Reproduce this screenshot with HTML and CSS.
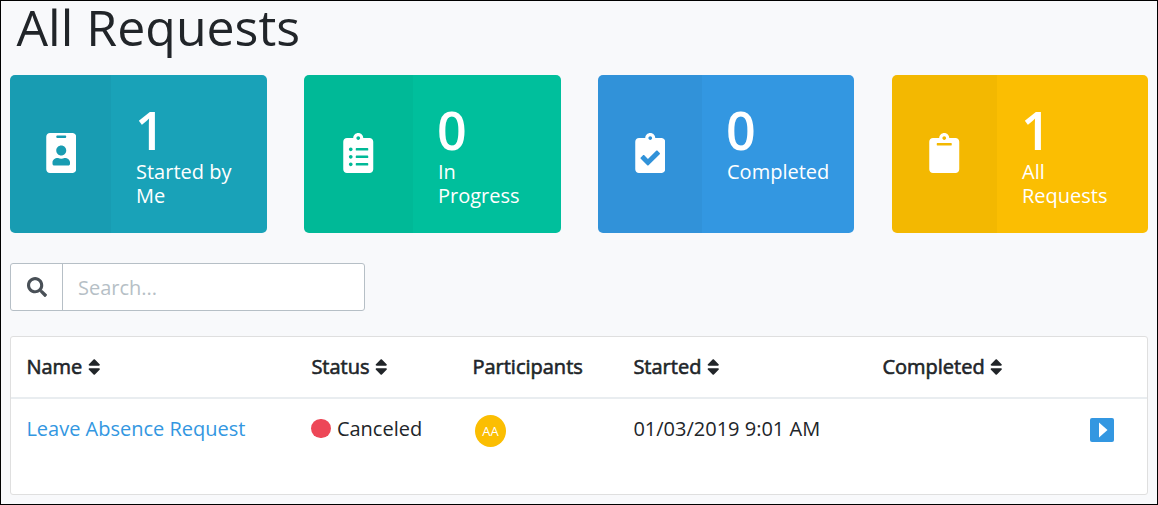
FILE: index.html
```
<!DOCTYPE html>
<html lang="en">
<head>
<meta charset="utf-8">
<title>All Requests</title>
<link rel="stylesheet" href="styles.css">
</head>
<body>
<main class="page">
  <h1 class="title">All Requests</h1>
  <section class="cards">
    <a class="card teal">
      <span class="card-icon"><svg viewBox="0 0 384 512"><path fill-rule="evenodd" d="M336 0H48C21.500 0 0 21.500 0 48v416c0 26.500 21.500 48 48 48h288c26.500 0 48-21.500 48-48V48c0-26.500-21.500-48-48-48zM144 32h96c8.800 0 16 7.200 16 16s-7.200 16-16 16h-96c-8.800 0-16-7.200-16-16s7.200-16 16-16zm48 128c35.300 0 64 28.700 64 64s-28.700 64-64 64-64-28.700-64-64 28.700-64 64-64zm112 236.800c0 10.600-10 19.200-22.400 19.200H102.400C90 416 80 407.400 80 396.800v-19.200c0-31.800 30.100-57.600 67.200-57.600h5c12.300 5.100 25.700 8 39.800 8s27.600-2.900 39.800-8h5c37.100 0 67.200 25.800 67.200 57.600v19.200z"/></svg></span>
      <span class="card-body"><strong class="count">1</strong><span class="label">Started by<br>Me</span></span>
    </a>
    <a class="card green">
      <span class="card-icon"><svg viewBox="0 0 384 512"><path fill-rule="evenodd" d="M336 64h-80c0-35.300-28.700-64-64-64s-64 28.700-64 64H48C21.500 64 0 85.500 0 112v352c0 26.500 21.500 48 48 48h288c26.500 0 48-21.500 48-48V112c0-26.500-21.500-48-48-48zM96 424c-13.300 0-24-10.700-24-24s10.700-24 24-24 24 10.700 24 24-10.700 24-24 24zm0-96c-13.300 0-24-10.700-24-24s10.700-24 24-24 24 10.700 24 24-10.700 24-24 24zm0-96c-13.300 0-24-10.700-24-24s10.700-24 24-24 24 10.700 24 24-10.700 24-24 24zm96-192c13.300 0 24 10.700 24 24s-10.700 24-24 24-24-10.700-24-24 10.700-24 24-24zm128 368c0 4.400-3.600 8-8 8H168c-4.400 0-8-3.600-8-8v-16c0-4.400 3.600-8 8-8h144c4.400 0 8 3.600 8 8v16zm0-96c0 4.400-3.600 8-8 8H168c-4.400 0-8-3.600-8-8v-16c0-4.400 3.600-8 8-8h144c4.400 0 8 3.600 8 8v16zm0-96c0 4.400-3.600 8-8 8H168c-4.400 0-8-3.600-8-8v-16c0-4.400 3.600-8 8-8h144c4.400 0 8 3.600 8 8v16z"/></svg></span>
      <span class="card-body"><strong class="count">0</strong><span class="label">In<br>Progress</span></span>
    </a>
    <a class="card blue">
      <span class="card-icon"><svg viewBox="0 0 384 512"><path fill-rule="evenodd" d="M336 64h-80c0-35.300-28.700-64-64-64s-64 28.700-64 64H48C21.500 64 0 85.500 0 112v352c0 26.500 21.500 48 48 48h288c26.500 0 48-21.500 48-48V112c0-26.500-21.500-48-48-48zM192 40c13.300 0 24 10.700 24 24s-10.700 24-24 24-24-10.700-24-24 10.700-24 24-24zm121.200 231.800l-143 141.800c-4.700 4.700-12.300 4.600-17-.1l-82.600-83.300c-4.700-4.700-4.600-12.300.1-17L99.100 285c4.700-4.700 12.300-4.600 17 .1l46 46.400 106-105.200c4.700-4.700 12.300-4.600 17 .1l28.200 28.400c4.700 4.800 4.600 12.300-.1 17z"/></svg></span>
      <span class="card-body"><strong class="count">0</strong><span class="label">Completed</span></span>
    </a>
    <a class="card yellow">
      <span class="card-icon"><svg viewBox="0 0 384 512"><path fill-rule="evenodd" d="M384 112v352c0 26.500-21.500 48-48 48H48c-26.500 0-48-21.500-48-48V112c0-26.500 21.500-48 48-48h80c0-35.300 28.700-64 64-64s64 28.700 64 64h80c26.500 0 48 21.500 48 48zM192 40c-13.300 0-24 10.700-24 24s10.700 24 24 24 24-10.700 24-24-10.700-24-24-24m96 114v-20a6 6 0 0 0-6-6H102a6 6 0 0 0-6 6v20a6 6 0 0 0 6 6h180a6 6 0 0 0 6-6z"/></svg></span>
      <span class="card-body"><strong class="count">1</strong><span class="label">All<br>Requests</span></span>
    </a>
  </section>

  <div class="search">
    <span class="search-icon"><svg viewBox="0 0 512 512"><path d="M505 442.700L405.300 343c-4.500-4.500-10.600-7-17-7H372c27.600-35.300 44-79.700 44-128C416 93.100 322.900 0 208 0S0 93.100 0 208s93.100 208 208 208c48.300 0 92.700-16.400 128-44v16.300c0 6.400 2.500 12.500 7 17l99.700 99.700c9.400 9.400 24.600 9.400 33.900 0l28.300-28.300c9.400-9.400 9.400-24.600.1-34zM208 336c-70.700 0-128-57.200-128-128 0-70.700 57.200-128 128-128 70.700 0 128 57.200 128 128 0 70.700-57.200 128-128 128z"/></svg></span>
    <input class="search-input" type="text" placeholder="Search...">
  </div>

  <section class="table">
    <div class="row head">
      <span>Name <svg class="sort" viewBox="0 0 320 512"><path d="M41 288h238c21.400 0 32.100 25.900 17 41L177 448c-9.400 9.400-24.600 9.400-33.900 0L24 329c-15.100-15.100-4.400-41 17-41zm255-105L177 64c-9.400-9.400-24.600-9.400-33.900 0L24 183c-15.100 15.100-4.400 41 17 41h238c21.400 0 32.100-25.900 17-41z"/></svg></span>
      <span>Status <svg class="sort" viewBox="0 0 320 512"><path d="M41 288h238c21.400 0 32.100 25.900 17 41L177 448c-9.400 9.400-24.600 9.400-33.900 0L24 329c-15.100-15.100-4.400-41 17-41zm255-105L177 64c-9.400-9.400-24.600-9.400-33.900 0L24 183c-15.100 15.100-4.400 41 17 41h238c21.400 0 32.100-25.900 17-41z"/></svg></span>
      <span>Participants</span>
      <span>Started <svg class="sort" viewBox="0 0 320 512"><path d="M41 288h238c21.400 0 32.100 25.900 17 41L177 448c-9.400 9.400-24.600 9.400-33.900 0L24 329c-15.100-15.100-4.400-41 17-41zm255-105L177 64c-9.400-9.400-24.600-9.400-33.900 0L24 183c-15.100 15.100-4.400 41 17 41h238c21.400 0 32.100-25.900 17-41z"/></svg></span>
      <span>Completed <svg class="sort" viewBox="0 0 320 512"><path d="M41 288h238c21.400 0 32.100 25.900 17 41L177 448c-9.400 9.400-24.600 9.400-33.900 0L24 329c-15.100-15.100-4.400-41 17-41zm255-105L177 64c-9.400-9.400-24.600-9.400-33.900 0L24 183c-15.100 15.100-4.400 41 17 41h238c21.400 0 32.100-25.900 17-41z"/></svg></span>
      <span></span>
    </div>
    <div class="row">
      <a class="link">Leave Absence Request</a>
      <span class="status"><i class="dot"></i>Canceled</span>
      <span class="avatar">AA</span>
      <span>01/03/2019 9:01 AM</span>
      <span></span>
      <svg class="open" viewBox="0 0 24 24"><rect width="24" height="24" rx="2" fill="#3397e1"/><path d="M9 4.500l8.500 7.500L9 19.500z" fill="#fff"/></svg>
    </div>
  </section>
</main>
</body>
</html>
```
FILE: styles.css
```
* { box-sizing: border-box; }
body {
  margin: 0;
  font: 20px/30px "Open Sans", sans-serif;
  color: #212529;
  background: #f8f9fb;
}
.page {
  height: 505px;
  padding: 0 9px;
  border: 1px solid #000;
}
.title {
  margin: 0 0 14px 6.500px;
  height: 60px;
  font-size: 50px;
  line-height: 52px;
  font-weight: 400;
}
.cards {
  display: grid;
  grid-template-columns: 257px 257px 256px 256px;
  column-gap: 37px;
}
.card {
  display: flex;
  height: 158px;
  border-radius: 5px;
  overflow: hidden;
  color: #fff;
}
.yellow { margin: 0 -1px 0 1px; }
.teal { background: #19a2b8; }
.green { background: #00bf9c; }
.blue { background: #3397e1; }
.yellow { background: #fbbe02; }
.card-icon {
  display: flex;
  flex: none;
  align-items: center;
  justify-content: center;
  padding: 0 0 2px;
  background: rgba(0, 0, 0, .03);
}
.teal .card-icon { width: 101px; padding-left: 1px; }
.green .card-icon { width: 109px; }
.blue .card-icon { width: 104px; }
.yellow .card-icon { width: 105px; }
.card-icon svg { width: 30.500px; height: 40px; fill: #fff; }
.card-body {
  display: flex;
  flex-direction: column;
  padding: 28px 0 0 25px;
}
.count { margin-left: -1px; font-size: 52px; line-height: 54px; font-weight: 600; }
.label { margin-top: 3px; line-height: 24px; }
.search {
  display: flex;
  width: 355px;
  height: 48px;
  margin-top: 30px;
  border: 1px solid #b6bfc6;
  border-radius: 3px;
  background: #fff;
  overflow: hidden;
}
.search-icon {
  display: flex;
  width: 52px;
  align-items: center;
  justify-content: center;
  padding: 0 0 1px;
  border-right: 1px solid #b6bfc6;
}
.search-icon svg { width: 20px; height: 20px; fill: #495057; }
.search-input {
  flex: 1;
  min-width: 0;
  padding: 2px 15px 0;
  border: 0;
  font: inherit;
  background: none;
}
.search-input::placeholder { color: #b6bfc6; opacity: 1; }
.table {
  height: 159px;
  margin-top: 25px;
  border: 1px solid #dfdfdf;
  border-radius: 3px;
  background: #fff;
}
.row {
  display: grid;
  grid-template-columns: 285px 161px 161px 249px 207.500px 1fr;
  padding: 15px 0 0 15.400px;
  white-space: nowrap;
}
.head {
  height: 62px;
  border-bottom: 2px solid #e9edf0;
  -webkit-text-stroke: .6px #212529;
}
.sort { width: 12.500px; height: 20px; vertical-align: -2.500px; fill: #212529; stroke: none; }
.link { color: #3397e1; }
.status { display: flex; }
.dot {
  width: 19.500px;
  height: 19.500px;
  margin: 4.500px 6px 0 0;
  border-radius: 50%;
  background: #ed4757;
}
.avatar {
  width: 31px;
  height: 32px;
  margin: 1px 0 0 2.600px;
  border-radius: 50%;
  background: #fbbe02;
  color: #fff;
  font-size: 13px;
  line-height: 32px;
  text-align: center;
}
.open { width: 24px; height: 24px; margin-top: 4px; }
```
